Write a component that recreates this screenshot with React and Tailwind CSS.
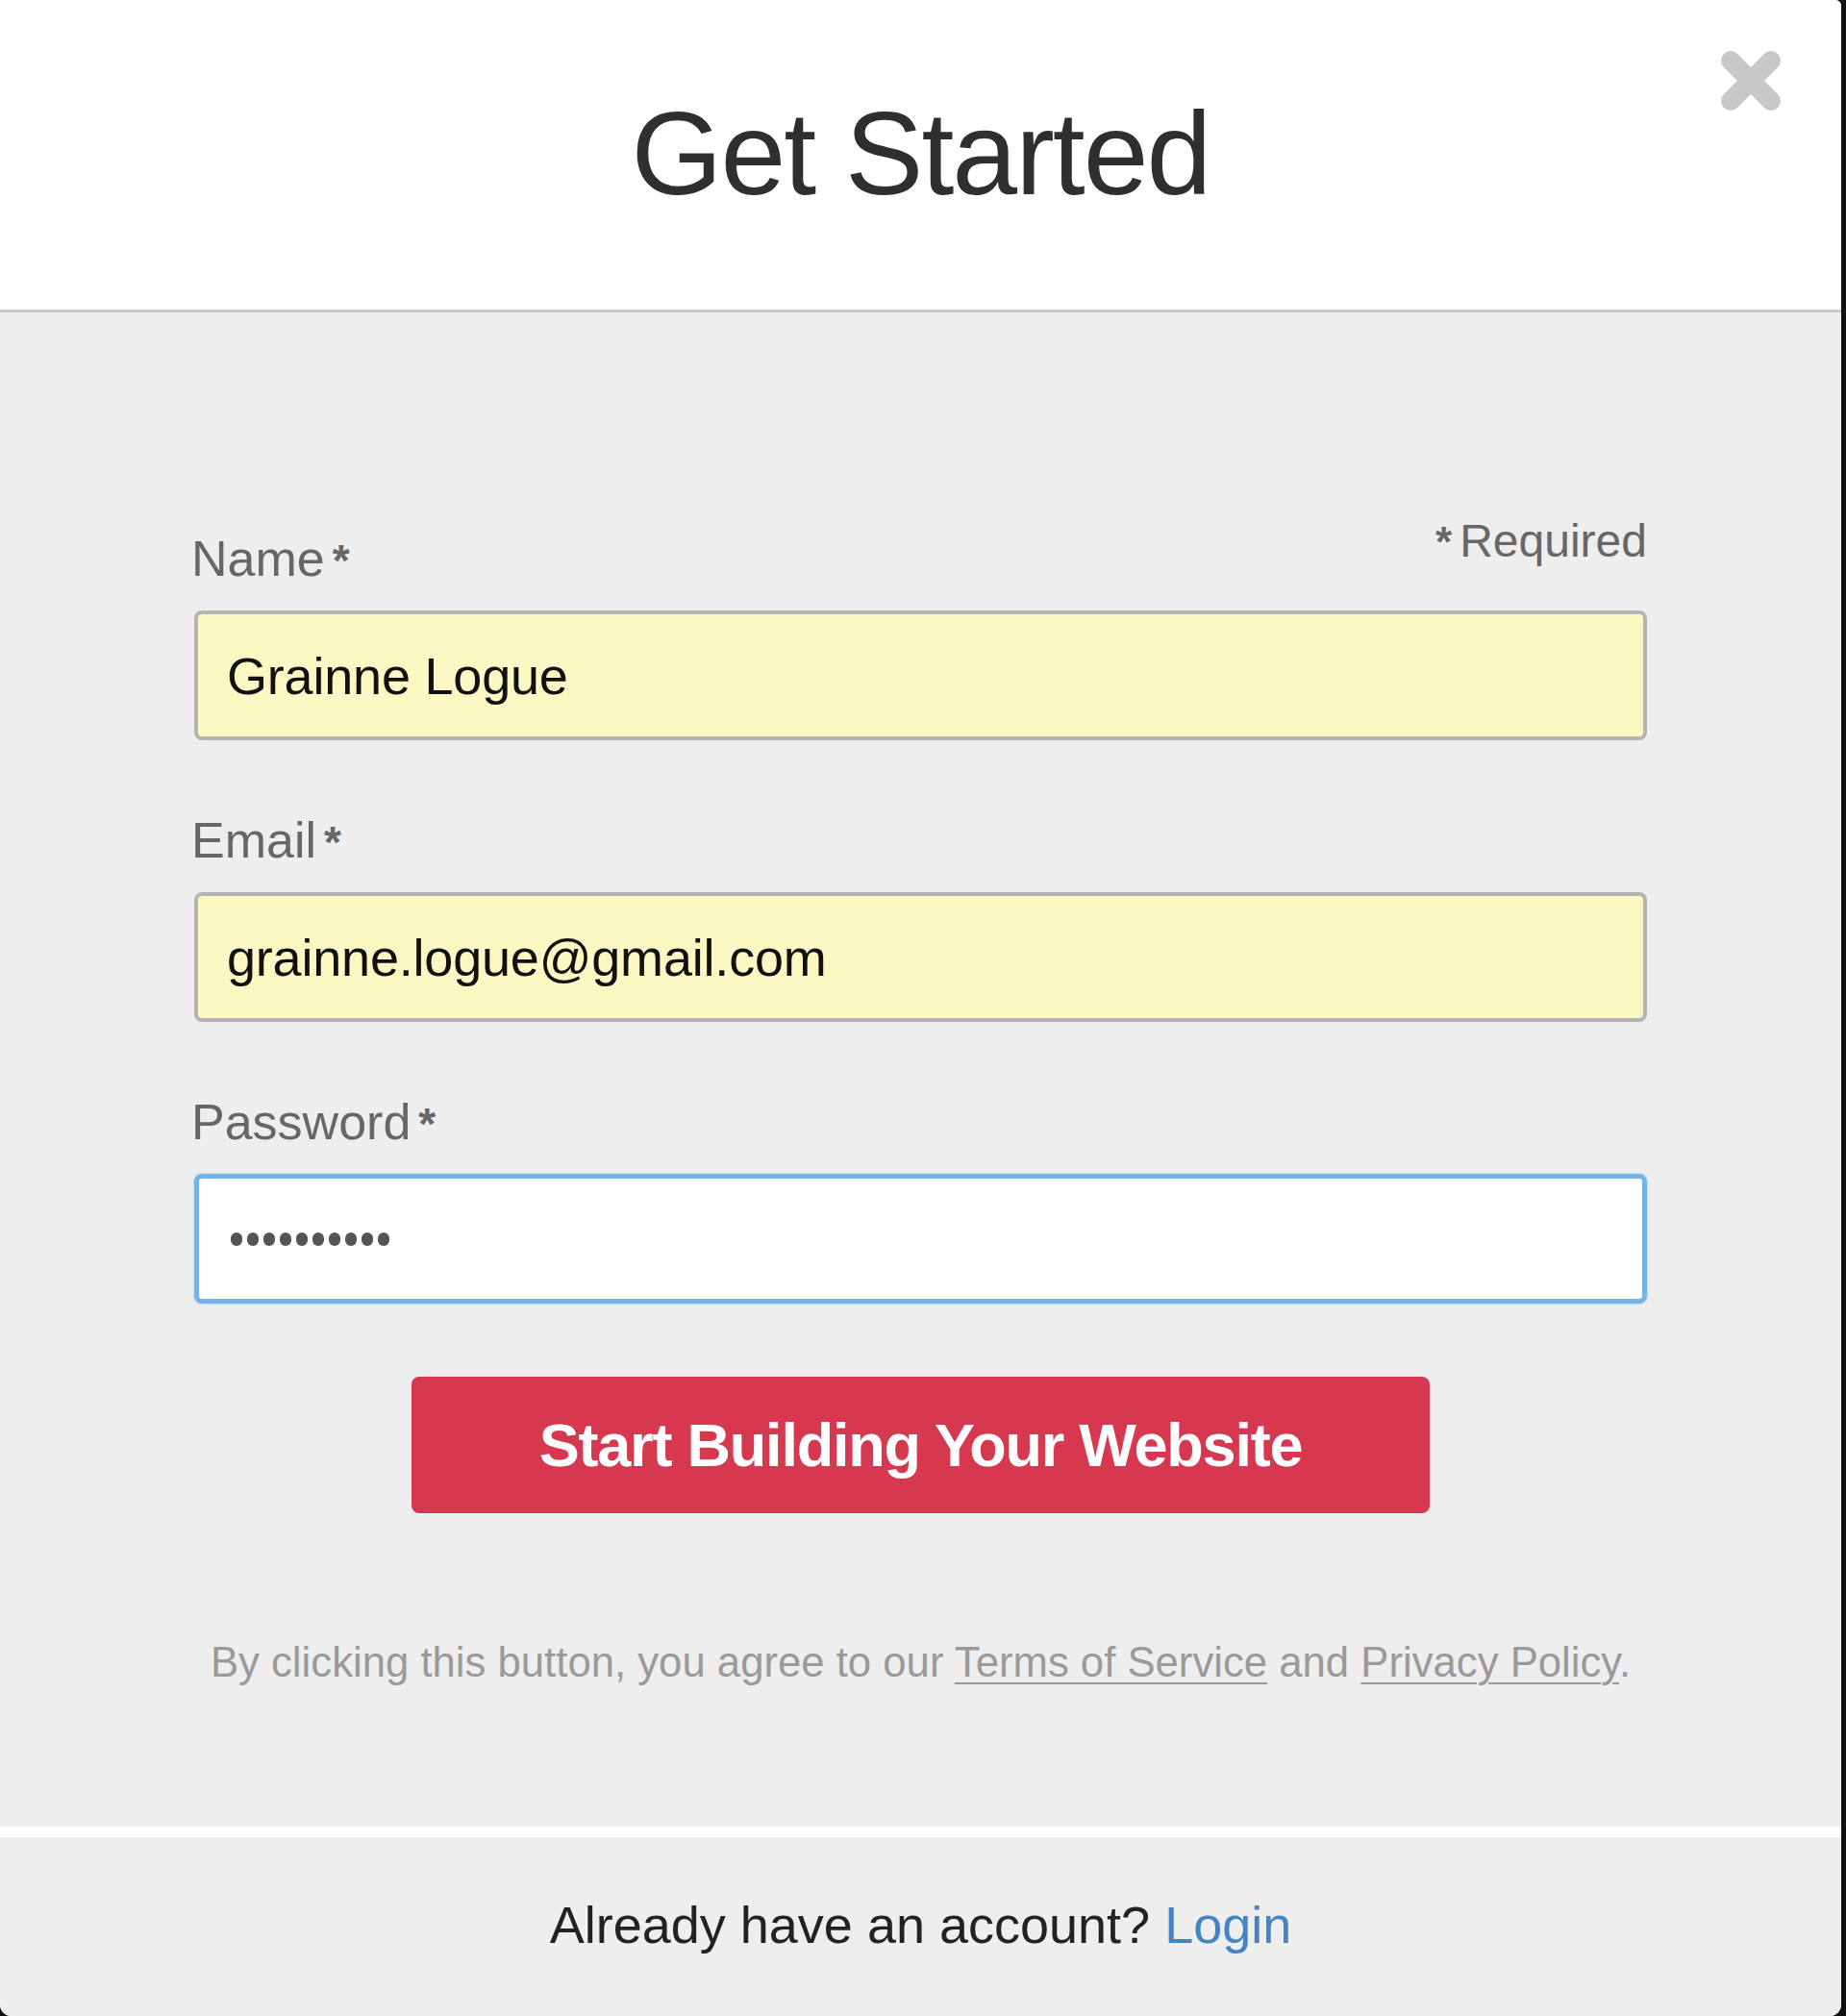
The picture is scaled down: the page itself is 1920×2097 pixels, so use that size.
import React from 'react';

const Label = ({ children }) => (
    <label className="block -ml-[3px] text-[52px] leading-none text-[#676767]">
        {children}
        <span className="text-[46px] font-bold ml-[8px]">*</span>
    </label>
);

const FilledInput = ({ value }) => (
    <div className="h-[135px] flex items-center px-[30px] bg-[#fcf8c3] border-[4px] border-[#b4b4b4] rounded-[8px] text-[54px] leading-none text-[#111] tracking-[-0.2px]">
        {value}
    </div>
);

const CloseIcon = () => (
    <svg width="64" height="64" viewBox="0 0 64 64">
        <line x1="11" y1="11" x2="53" y2="53" stroke="#c8c8c8" strokeWidth="20" strokeLinecap="round" />
        <line x1="53" y1="11" x2="11" y2="53" stroke="#c8c8c8" strokeWidth="20" strokeLinecap="round" />
    </svg>
);

const App = () => {
    return (
        <div className="min-h-[2097px] bg-[#111] font-['Liberation_Sans',Arial,sans-serif]">
            <div className="w-[1915px] h-[2097px] flex flex-col bg-white rounded-tr-[6px] rounded-b-[12px] overflow-hidden">
                {/* Header */}
                <div className="relative h-[325px] pt-[99px] bg-white border-b-[3px] border-[#c9c9c9] shrink-0">
                    <h1 className="text-center text-[122px] leading-none text-[#2f2f2f] tracking-[-2px]">Get Started</h1>
                    <button className="absolute top-[52px] right-[62px]">
                        <CloseIcon />
                    </button>
                </div>

                {/* Form body */}
                <div className="bg-[#eeeeee] px-[202px] pt-[214px] flex-1">
                    <div className="flex justify-between items-start">
                        <div className="mt-[16px]">
                            <Label>Name</Label>
                        </div>
                        <div className="text-[48px] leading-none text-[#676767]">
                            <span className="text-[44px] font-bold mr-[8px]">*</span>Required
                        </div>
                    </div>
                    <div className="mt-[28px]">
                        <FilledInput value="Grainne Logue" />
                    </div>

                    <div className="mt-[78px]">
                        <Label>Email</Label>
                    </div>
                    <div className="mt-[28px]">
                        <FilledInput value="grainne.logue@gmail.com" />
                    </div>

                    <div className="mt-[78px]">
                        <Label>Password</Label>
                    </div>
                    <div className="mt-[28px]">
                        <div className="h-[135px] flex items-center gap-[5px] px-[33px] bg-white border-[5px] border-[#74b3e7] rounded-[8px] shadow-[0_0_3px_rgba(116,179,231,0.6)]">
                            {Array.from({ length: 10 }).map((_, i) => (
                                <span key={i} className="w-[12px] h-[14px] rounded-full bg-[#555]"></span>
                            ))}
                        </div>
                    </div>

                    <div className="flex justify-center mt-[76px]">
                        <button className="w-[1059px] h-[142px] bg-[#d63850] rounded-[8px] text-white font-bold text-[63px] leading-none tracking-[-1.2px]">
                            Start Building Your Website
                        </button>
                    </div>

                    <p className="mt-[133px] text-center text-[43.7px] leading-none text-[#9a9a9a]">
                        By clicking this button, you agree to our{' '}
                        <a className="underline decoration-[2px] underline-offset-[6px]">Terms of Service</a>
                        {' '}and{' '}
                        <a className="underline decoration-[2px] underline-offset-[6px]">Privacy Policy</a>.
                    </p>
                </div>

                {/* Footer */}
                <div className="h-[197px] shrink-0 bg-[#eeeeee] border-t-[11px] border-white pt-[64px] text-center text-[54px] leading-none text-[#222]">
                    Already have an account? <a className="text-[#4384c3]">Login</a>
                </div>
            </div>
        </div>
    );
};

export default App;
